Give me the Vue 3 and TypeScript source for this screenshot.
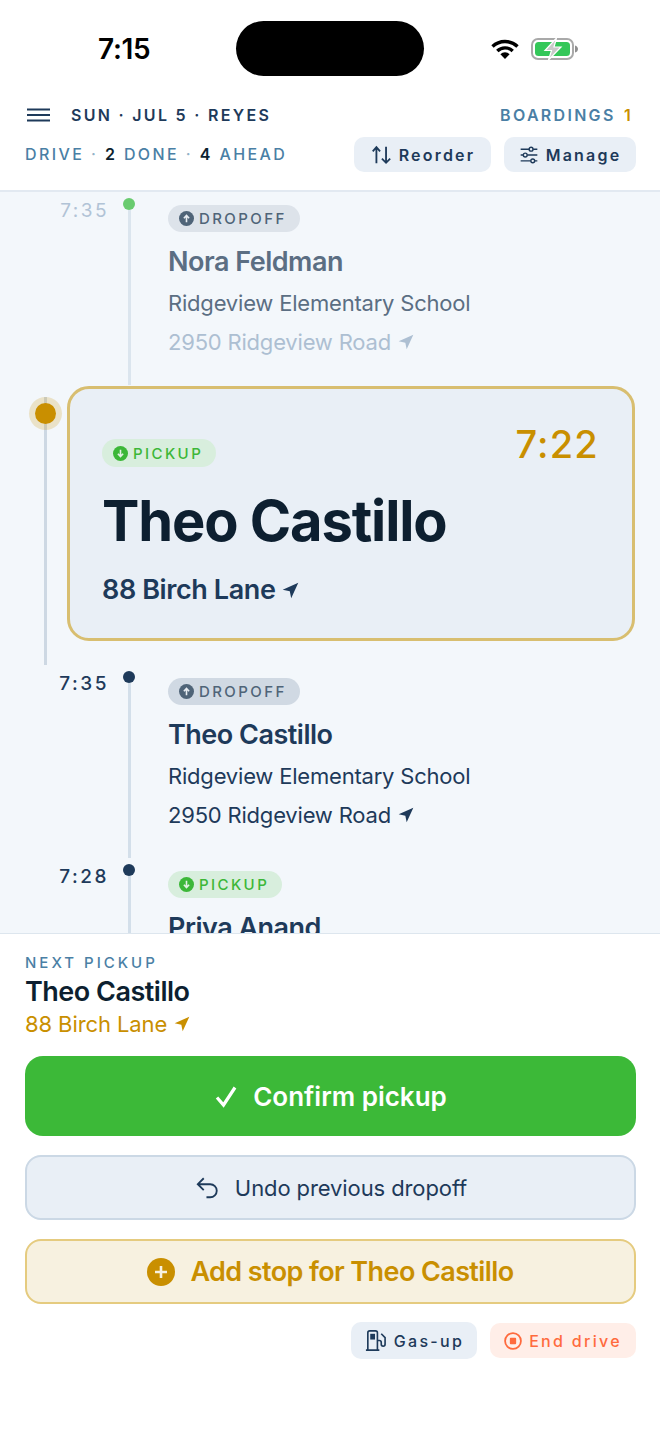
<template>
  <div class="screen">
    <div class="status">
      <span class="clock">7:15</span>
      <div class="island" />
      <div class="status-icons">
        <svg class="wifi" viewBox="0 0 28 20" width="28" height="20">
          <path d="M1.5 7.500a18 18 0 0 1 25 0" fill="none" stroke="#000" stroke-width="3.400" />
          <path d="M6.300 12a11 11 0 0 1 15.400 0" fill="none" stroke="#000" stroke-width="3.400" />
          <path d="M14 20l-4.600-4.800a6.500 6.500 0 0 1 9.200 0z" fill="#000" />
        </svg>
        <svg class="battery" viewBox="0 0 47 22" width="47" height="22">
          <rect x="1" y="1" width="41" height="20" rx="6" fill="none" stroke="#a9a9a9" stroke-width="2" />
          <rect x="4" y="4" width="35" height="14" rx="3.500" fill="#34c759" />
          <path d="M44 7.500c2 .5 3 2 3 3.500s-1 3-3 3.500z" fill="#8f8f8f" />
          <path d="M25.500 0 14 12.500h6.500L17.500 22 30 9h-7z" fill="#c9c9c9" stroke="#fff" stroke-width="1.200" />
        </svg>
      </div>
    </div>

    <header class="head">
      <div class="head-row">
        <div class="head-left">
          <svg class="menu" viewBox="0 0 24 14" width="24" height="14">
            <path d="M0 1.500h23M0 7h23M0 12.500h23" stroke="#1e3a5a" stroke-width="2.200" />
          </svg>
          <span class="date">SUN · JUL 5 · REYES</span>
        </div>
        <span class="boardings">BOARDINGS <b>1</b></span>
      </div>
      <div class="head-row second">
        <span class="progress">DRIVE <i>·</i> <b>2</b> DONE <i>·</i> <b>4</b> AHEAD</span>
        <div class="tools">
          <button class="tool reorder">
            <svg viewBox="0 0 24 24" width="22" height="22" class="ico">
              <path d="M3 8l4-4.500 4 4.500M7 3.500V21M13 16l4.500 4.500L22 16M17.500 20.500V3" />
            </svg>
            Reorder
          </button>
          <button class="tool manage">
            <svg viewBox="0 0 24 24" width="20" height="20" class="ico thin">
              <path d="M2 5h10M17 5h5M2 12h3M10 12h12M2 19h12M19 19h3" />
              <circle cx="14.500" cy="5" r="2.300" />
              <circle cx="7.500" cy="12" r="2.300" />
              <circle cx="16.500" cy="19" r="2.300" />
            </svg>
            Manage
          </button>
        </div>
      </div>
    </header>

    <section class="timeline">
      <div v-for="stop in stops" :key="stop.id" class="stop-wrap">
        <div v-if="stop.current" class="current">
          <div class="current-rail">
            <span class="halo"><span class="halo-dot" /></span>
          </div>
          <div class="card">
            <div class="card-top">
              <span class="pill pickup">
                <svg viewBox="0 0 16 16" width="15" height="15"><circle cx="8" cy="8" r="8" fill="#3cb738" /><path d="M8 4v7M5.200 8.300 8 11.200l2.800-2.900" fill="none" stroke="#e2f1e4" stroke-width="1.700" /></svg>
                PICKUP
              </span>
              <span class="card-time">{{ stop.time }}</span>
            </div>
            <h1 class="card-name">{{ stop.name }}</h1>
            <div class="card-addr">
              {{ stop.address }}
              <svg viewBox="0 0 24 24" width="17" height="17"><path d="M23 1 1 11l10 2 2 10z" fill="#1e3a5a" /></svg>
            </div>
          </div>
        </div>

        <div v-else class="stop" :class="{ done: stop.done }">
          <span class="time">{{ stop.time }}</span>
          <div class="rail">
            <span class="dot" />
            <span class="line" />
          </div>
          <div class="body">
            <span class="pill" :class="stop.kind">
              <svg viewBox="0 0 16 16" width="15" height="15">
                <circle cx="8" cy="8" r="8" class="pill-disc" />
                <path v-if="stop.kind === 'pickup'" d="M8 4v7M5.200 8.300 8 11.200l2.800-2.900" fill="none" stroke="#e2f1e4" stroke-width="1.700" />
                <path v-else d="M8 12V5M5.200 7.700 8 4.800l2.800 2.900" fill="none" stroke="#e8edf2" stroke-width="1.700" />
              </svg>
              {{ stop.kind === "pickup" ? "PICKUP" : "DROPOFF" }}
            </span>
            <div class="name">{{ stop.name }}</div>
            <div v-if="stop.place" class="place">{{ stop.place }}</div>
            <div class="addr">
              {{ stop.address }}
              <svg viewBox="0 0 24 24" width="16" height="16"><path d="M23 1 1 11l10 2 2 10z" class="nav-fill" /></svg>
            </div>
          </div>
        </div>
      </div>
    </section>

    <footer class="foot">
      <div class="next-label">NEXT PICKUP</div>
      <div class="next-name">Theo Castillo</div>
      <div class="next-addr">
        88 Birch Lane
        <svg viewBox="0 0 24 24" width="16" height="16"><path d="M23 1 1 11l10 2 2 10z" fill="#c98f00" /></svg>
      </div>

      <button class="btn confirm">
        <svg viewBox="0 0 24 24" width="24" height="24"><path d="M3 13.500 9.500 21 21 3.500" fill="none" stroke="#fff" stroke-width="3.200" /></svg>
        Confirm pickup
      </button>
      <button class="btn undo">
        <svg viewBox="0 0 24 24" width="26" height="26" class="ico slim"><path d="M9 14 3.500 8.500 9 3M3.500 8.500H15a5.800 5.800 0 0 1 0 12h-3.500" /></svg>
        Undo previous dropoff
      </button>
      <button class="btn add">
        <svg viewBox="0 0 28 28" width="28" height="28"><circle cx="14" cy="14" r="14" fill="#c98f00" /><path d="M14 8v12M8 14h12" stroke="#f7f1e0" stroke-width="2.600" /></svg>
        Add stop for Theo Castillo
      </button>

      <div class="extras">
        <button class="extra gas">
          <svg viewBox="0 0 24 24" width="23" height="23" class="ico slim">
            <path d="M2 22h14M4 22V4a2 2 0 0 1 2-2h6a2 2 0 0 1 2 2v18M14 12h2a2 2 0 0 1 2 2v2a2 2 0 0 0 4 0V9l-4-4" />
            <rect x="6.500" y="5" width="5" height="6" fill="#1e3a5a" stroke="none" />
          </svg>
          Gas-up
        </button>
        <button class="extra end">
          <svg viewBox="0 0 20 20" width="18" height="18"><circle cx="10" cy="10" r="8.800" fill="none" stroke="#ff6a3d" stroke-width="2" /><rect x="6.500" y="6.500" width="7" height="7" rx="1" fill="#ff6a3d" /></svg>
          End drive
        </button>
      </div>
    </footer>
  </div>
</template>

<script setup lang="ts">
interface Stop {
  id: number;
  time: string;
  name: string;
  kind: "pickup" | "dropoff";
  address: string;
  place?: string;
  done?: boolean;
  current?: boolean;
}

const school = "Ridgeview Elementary School";
const schoolRoad = "2950 Ridgeview Road";

const stops: Stop[] = [
  { id: 1, time: "7:35", name: "Nora Feldman", kind: "dropoff", place: school, address: schoolRoad, done: true },
  { id: 2, time: "7:22", name: "Theo Castillo", kind: "pickup", address: "88 Birch Lane", current: true },
  { id: 3, time: "7:35", name: "Theo Castillo", kind: "dropoff", place: school, address: schoolRoad },
  { id: 4, time: "7:28", name: "Priya Anand", kind: "pickup", address: "14 Alder Court" }
];
</script>

<style>
body {
  background: #fff;
}
</style>

<style scoped>
.screen {
  width: 660px;
  height: 1434px;
  display: flex;
  flex-direction: column;
  overflow: hidden;
  background: #fff;
  color: #1e3a5a;
  font-family: Inter, "Liberation Sans", sans-serif;
}
button {
  font-family: inherit;
  border: none;
  display: flex;
  align-items: center;
  justify-content: center;
}
svg {
  display: block;
  flex: none;
}
.ico {
  fill: none;
  stroke: #1e3a5a;
  stroke-width: 2;
}
.ico.thin,
.ico.slim {
  stroke-width: 1.7;
}

/* status bar */
.status {
  height: 97px;
  flex: none;
  display: flex;
  padding: 21px 0 0 98px;
  box-sizing: border-box;
}
.clock {
  width: 138px;
  font-size: 28px;
  font-weight: 600;
  color: #000;
  line-height: 56px;
  letter-spacing: -0.3px;
}
.island {
  width: 188px;
  height: 55px;
  border-radius: 28px;
  background: #000;
}
.status-icons {
  display: flex;
  align-items: center;
  gap: 12px;
  height: 55px;
  margin-left: 67px;
}

/* header */
.head {
  flex: none;
  height: 93px;
  padding: 0 24px 0 25px;
  border-bottom: 2px solid #e2e9f1;
}
.head-row {
  display: flex;
  justify-content: space-between;
  align-items: center;
  height: 36px;
}
.head-row.second {
  height: 35px;
  margin-top: 4px;
}
.head-left {
  display: flex;
  align-items: center;
  gap: 20px;
  padding-left: 2px;
}
.date {
  font-size: 16px;
  font-weight: 600;
  letter-spacing: 2.3px;
}
.boardings {
  font-size: 16px;
  font-weight: 600;
  letter-spacing: 2.3px;
  color: #4a7fa5;
  margin-right: 3px;
}
.boardings b {
  font-weight: 600;
  color: #c98f00;
  margin-left: 2px;
}
.progress {
  font-size: 16px;
  font-weight: 500;
  letter-spacing: 2.400px;
  color: #4a7fa5;
  margin-bottom: 2px;
}
.progress b {
  font-weight: 600;
  color: #0d1f30;
}
.progress i {
  font-style: normal;
  opacity: 0.6;
}
.tools {
  display: flex;
  gap: 13px;
}
.tool {
  height: 35px;
  border-radius: 10px;
  background: #e9eff6;
  color: #1e3a5a;
  font-size: 16px;
  font-weight: 600;
  letter-spacing: 2.2px;
  gap: 7px;
  padding: 0;
}
.reorder {
  width: 137px;
}
.manage {
  width: 132px;
}

/* timeline */
.timeline {
  flex: 1;
  min-height: 0;
  overflow: hidden;
  background: #f3f7fb;
}
.stop {
  display: flex;
  height: 193px;
}
.time {
  width: 109px;
  flex: none;
  text-align: right;
  font-size: 19px;
  letter-spacing: 2.500px;
  margin-top: 7px;
  line-height: 23px;
  font-weight: 500;
}
.rail {
  width: 40px;
  flex: none;
  display: flex;
  flex-direction: column;
  align-items: center;
  padding-top: 6px;
}
.dot {
  width: 12px;
  height: 12px;
  border-radius: 50%;
  background: #1e3a5a;
  flex: none;
}
.line {
  width: 3px;
  flex: 1;
  background: #d3dfea;
}
.body {
  margin-left: 19px;
  padding-top: 13px;
  min-width: 0;
}
.pill {
  display: inline-flex;
  align-items: center;
  gap: 5px;
  height: 27px;
  padding: 0 13px 0 11px;
  border-radius: 14px;
  font-size: 15px;
  font-weight: 500;
  letter-spacing: 2.400px;
  box-sizing: border-box;
}
.pill.dropoff {
  background: #d0d9e3;
  color: #4f6478;
}
.pill-disc {
  fill: #4f6478;
}
.pill.pickup {
  background: #d8eedd;
  color: #3cb738;
}
.pickup .pill-disc {
  fill: #3cb738;
}
.name {
  font-size: 27px;
  font-weight: 600;
  line-height: 34px;
  margin-top: 13px;
  letter-spacing: -0.5px;
}
.place {
  font-size: 22px;
  line-height: 28px;
  margin-top: 10px;
  letter-spacing: -0.2px;
}
.addr {
  display: flex;
  align-items: center;
  gap: 7px;
  font-size: 22px;
  line-height: 28px;
  margin-top: 11px;
  letter-spacing: -0.2px;
}
.nav-fill {
  fill: #1e3a5a;
}
.done .time {
  color: #b1c3d6;
  font-weight: 400;
}
.done .dot {
  background: #69cb6f;
}
.done .line {
  background: #dbe5ee;
}
.done .pill.dropoff {
  background: #dde3ea;
}
.done .name,
.done .place {
  color: #5b6e83;
}
.done .addr {
  color: #adbfd2;
}
.done .nav-fill {
  fill: #adbfd2;
}

/* current stop */
.current {
  display: flex;
  height: 280px;
  padding: 1px 25px 0 29px;
  box-sizing: border-box;
  gap: 5px;
}
.current-rail {
  width: 33px;
  flex: none;
  margin-top: 11px;
  display: flex;
  flex-direction: column;
  align-items: center;
  background: linear-gradient(#cdd8e3, #cdd8e3) center / 3px 100% no-repeat;
}
.halo {
  width: 33px;
  height: 33px;
  border-radius: 50%;
  background: rgba(201, 143, 0, 0.2);
  display: flex;
  align-items: center;
  justify-content: center;
  flex: none;
}
.halo-dot {
  width: 21px;
  height: 21px;
  border-radius: 50%;
  background: #c98f00;
}
.card {
  flex: 1;
  height: 255px;
  box-sizing: border-box;
  border: 3px solid #d8be70;
  border-radius: 22px;
  background: #e9eff6;
  padding: 33px 33px 0 32px;
}
.card-top {
  display: flex;
  justify-content: space-between;
  align-items: flex-start;
  height: 50px;
}
.card-top .pill {
  margin-top: 17px;
  height: 28px;
}
.card-time {
  font-size: 38px;
  font-weight: 500;
  line-height: 46px;
  color: #c98f00;
  letter-spacing: 1.200px;
  margin-top: -1px;
}
.card-name {
  margin: 15px 0 0;
  font-size: 56px;
  font-weight: 700;
  line-height: 68px;
  letter-spacing: -1.100px;
  color: #0d1f30;
}
.card-addr {
  display: flex;
  align-items: center;
  gap: 7px;
  margin-top: 18px;
  font-size: 27px;
  font-weight: 600;
  line-height: 34px;
  letter-spacing: -0.4px;
}

/* footer */
.foot {
  flex: none;
  height: 501px;
  box-sizing: border-box;
  border-top: 1px solid #dde6ee;
  padding: 19px 24px 0 25px;
  background: #fff;
}
.next-label {
  font-size: 15px;
  font-weight: 500;
  letter-spacing: 3px;
  line-height: 20px;
  color: #4a7fa5;
}
.next-name {
  font-size: 27px;
  font-weight: 600;
  line-height: 34px;
  margin-top: 2px;
  letter-spacing: -0.5px;
  color: #0d1f30;
}
.next-addr {
  display: flex;
  align-items: center;
  gap: 7px;
  font-size: 22px;
  line-height: 28px;
  margin-top: 1px;
  letter-spacing: -0.1px;
  color: #c98f00;
}
.btn {
  width: 100%;
  box-sizing: border-box;
  gap: 15px;
}
.confirm {
  height: 80px;
  margin-top: 18px;
  border-radius: 18px;
  background: #3cb938;
  color: #fff;
  font-size: 26px;
  font-weight: 600;
}
.undo {
  height: 65px;
  margin-top: 19px;
  border-radius: 16px;
  border: 2px solid #cbd8e5;
  background: #e9eff6;
  color: #1e3a5a;
  font-size: 22px;
  letter-spacing: -0.1px;
}
.add {
  height: 65px;
  margin-top: 19px;
  border-radius: 16px;
  border: 2px solid #e5cb7f;
  background: #f7f1e0;
  color: #c98f00;
  font-size: 27px;
  font-weight: 600;
  letter-spacing: -0.6px;
}
.extras {
  display: flex;
  justify-content: flex-end;
  align-items: center;
  gap: 13px;
  margin-top: 18px;
}
.extra {
  border-radius: 10px;
  font-size: 16px;
  font-weight: 500;
  letter-spacing: 2.300px;
  gap: 7px;
  padding: 0;
}
.gas {
  width: 126px;
  height: 37px;
  background: #e9eff6;
  color: #1e3a5a;
}
.end {
  width: 146px;
  height: 35px;
  background: #ffeee8;
  color: #ff6a3d;
}
</style>
